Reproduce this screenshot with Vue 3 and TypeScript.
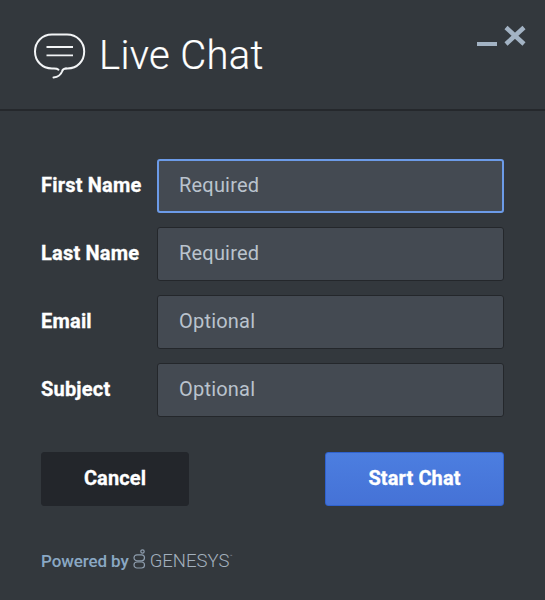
<script setup lang="ts">
interface Field { label: string; hint: string; focused?: boolean }
const fields: Field[] = [
  { label: 'First Name', hint: 'Required', focused: true },
  { label: 'Last Name', hint: 'Required' },
  { label: 'Email', hint: 'Optional' },
  { label: 'Subject', hint: 'Optional' },
]
</script>

<template>
  <div class="chat">
    <header class="head">
      <svg class="bubble" width="53" height="46" viewBox="0 0 53 46" fill="none" stroke="#f2f4f6" stroke-width="2" stroke-linecap="round" stroke-linejoin="round">
        <path d="M33 35.500H34.500C44.500 35.500 51.200 28 51.200 18.500C51.200 9 44 1.500 34 1.500H19C9 1.500 2 9 2 18.500C2 28 9 35.500 19 35.500H21c2 0 3.500.3 4.500 1.200" />
        <path d="M33 35.500c-2.500 0-3.500 1.200-4 3-1 3-4 5.500-8.500 6" />
        <path d="M13.500 14H40M13.500 22.300H40" stroke-width="1.800" stroke-linecap="butt" />
      </svg>
      <h1 class="title">Live Chat</h1>
      <div class="win">
        <svg width="52" height="28" viewBox="0 0 52 28" fill="none" stroke="#a3b3c4">
          <path d="M2 22h20" stroke-width="4" />
          <path d="M31 5.500l18 16.500M49 5.500L31 22" stroke-width="4.500" />
        </svg>
      </div>
    </header>

    <form class="form">
      <div v-for="f in fields" :key="f.label" class="row">
        <label class="label">{{ f.label }}</label>
        <input class="field" :class="{ focused: f.focused }" :placeholder="f.hint" />
      </div>
      <div class="actions">
        <button type="button" class="btn cancel">Cancel</button>
        <button type="button" class="btn start">Start Chat</button>
      </div>
    </form>

    <footer class="foot">
      <span class="powered">Powered by</span>
      <svg class="logo" width="13" height="24" viewBox="0 0 13 24" fill="none" stroke="#8e9dad" stroke-width="1.200">
        <circle cx="9.500" cy="2.500" r="1.700" />
        <rect x="1" y="5.800" width="10.500" height="6" rx="3" />
        <rect x="1" y="13" width="10.500" height="6" rx="3" />
      </svg>
      <span class="brand">GENESYS<span class="tm">™</span></span>
    </footer>
  </div>
</template>

<style>
html, body { margin: 0; background: #33383d; }
</style>

<style scoped>
.chat {
  width: 545px;
  height: 600px;
  background: #33383d;
  font-family: Roboto, "Liberation Sans", sans-serif;
  display: flex;
  flex-direction: column;
  overflow: hidden;
}
.head {
  height: 109px;
  box-sizing: content-box;
  border-bottom: 2px solid #25282c;
  display: flex;
  align-items: flex-start;
  padding-left: 33px;
  position: relative;
}
.bubble { margin-top: 33px; }
.title {
  margin: 31px 0 0 13px;
  font-size: 40px;
  line-height: 50px;
  font-weight: 300;
  letter-spacing: 0.33px;
  -webkit-text-stroke: 0.2px #fff;
  color: #fff;
}
.win {
  position: absolute;
  top: 22px;
  left: 475px;
  line-height: 0;
}
.form {
  display: flex;
  flex-direction: column;
  padding: 48px 41px 0;
}
.row {
  display: flex;
  align-items: center;
  height: 54px;
  margin-bottom: 14px;
}
.label {
  width: 116px;
  padding-bottom: 2px;
  font-size: 20px;
  font-weight: 700;
  letter-spacing: 0.2px;
  -webkit-text-stroke: 0.3px #fff;
  color: #fff;
}
.field {
  width: 347px;
  height: 54px;
  box-sizing: border-box;
  padding: 0 21px 2px;
  background: #444a52;
  border: 1px solid #24272b;
  border-radius: 3px;
  font: 400 20px Roboto, "Liberation Sans", sans-serif;
  letter-spacing: 0.2px;
  color: #fff;
  outline: none;
}
.field::placeholder { color: #bac3cd; opacity: 1; }
.field.focused { border: 2px solid #6c9be8; padding: 0 20px 2px; }
.actions {
  display: flex;
  justify-content: space-between;
  margin-top: 21px;
}
.btn {
  height: 54px;
  border-radius: 3px;
  font: 700 20px Roboto, "Liberation Sans", sans-serif;
  letter-spacing: 0.1px;
  -webkit-text-stroke: 0.3px #fff;
  color: #fff;
  padding: 0 0 2px;
}
.cancel { width: 148px; background: #23262b; border: 1px solid #23262b; }
.start { width: 179px; background: linear-gradient(#4c7ee0, #4572d6); border: 1px solid #2f62cf; }
.foot {
  display: flex;
  align-items: center;
  margin: 41px 0 0 41px;
  height: 28px;
}
.powered { font-size: 17px; font-weight: 500; letter-spacing: -0.1px; color: #8aa8c4; }
.logo { margin-left: 4px; }
.brand { margin-left: 4px; font-size: 18.500px; font-weight: 300; letter-spacing: 0; color: #a3b0bd; }
.tm { font-size: 5px; vertical-align: 9px; }
</style>
